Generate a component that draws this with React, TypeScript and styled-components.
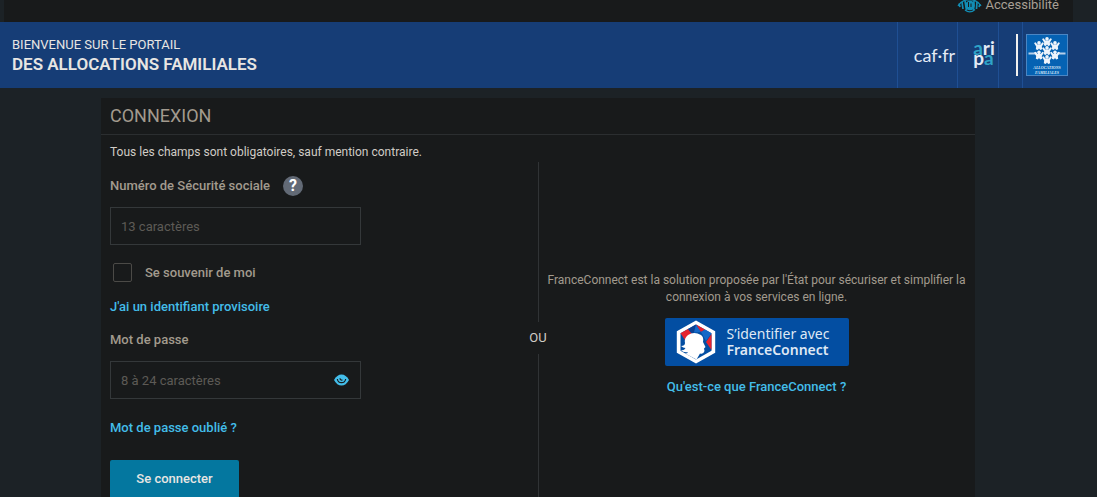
import React from "react";
import styled, { createGlobalStyle } from "styled-components";

const Global = createGlobalStyle`
  *, *::before, *::after { box-sizing: border-box; }
  body {
    margin: 0;
    background: #1c2226;
    color: #a29a8e;
    font-family: Roboto, "Liberation Sans", sans-serif;
    font-size: 13px;
    line-height: 18px;
  }
  a { text-decoration: none; }
  p, h1, h2 { margin: 0; }
`;

const Page = styled.div`
  min-height: 100vh;
  display: flex;
  flex-direction: column;
`;

const TopBar = styled.div`
  display: flex;
  justify-content: flex-end;
  align-items: flex-start;
  height: 22px;
  margin: 0 24px 0 4px;
  padding-right: 14px;
  background: #181a1b;
`;

const AccessLink = styled.a`
  display: flex;
  align-items: center;
  gap: 4px;
  height: 10px;
  color: #a8a095;
  font-size: 13px;
`;

const Header = styled.header`
  display: flex;
  justify-content: space-between;
  height: 66px;
  padding-left: 12px;
  background: #163d76;
`;

const Heading = styled.h1`
  display: flex;
  flex-direction: column;
  justify-content: center;
  color: #e8e6e3;
  font-size: 17px;
  font-weight: 600;
  line-height: 20px;
`;

const Welcome = styled.span`
  font-size: 13px;
  font-weight: 400;
  line-height: 18px;
`;

const Partners = styled.nav`
  display: flex;
  padding-right: 28px;
`;

const Partner = styled.a<{ $width: number; $inset?: number }>`
  display: flex;
  align-items: center;
  justify-content: center;
  width: ${(p) => p.$width}px;
  padding-left: ${(p) => p.$inset ?? 0}px;
  border-left: 1px solid #1f4f93;
  color: #e4ebf5;
`;

const CafName = styled.span`
  font-family: Lato, sans-serif;
  font-size: 18px;
`;

const Aripa = styled.span`
  padding-bottom: 4px;
  font-family: Lato, sans-serif;
  font-size: 19px;
  font-weight: 700;
  line-height: 10px;
`;

const Teal = styled.span`
  color: #2fa3c7;
`;

const Bar = styled.span`
  width: 2px;
  height: 42px;
  background: #f1f1ee;
`;

const Card = styled.main`
  flex: 1 0 auto;
  display: flex;
  flex-direction: column;
  margin: 10px 122px 0 101px;
  background: #181a1b;
`;

const CardTitle = styled.h2`
  height: 37px;
  padding-left: 9px;
  border-bottom: 1px solid #2b2e30;
  font-size: 18px;
  font-weight: 400;
  line-height: 36px;
  color: #a29a8e;
`;

const Columns = styled.div`
  flex: 1;
  display: grid;
  grid-template-columns: 1fr 18px 1fr;
`;

const Form = styled.form`
  display: flex;
  flex-direction: column;
  align-items: flex-start;
  padding: 8px 0 0 9px;
`;

const Note = styled.p`
  color: #d0ccc6;
  font-size: 12px;
  line-height: 19px;
`;

const LabelRow = styled.div`
  display: flex;
  align-items: center;
  gap: 13px;
  height: 20px;
  margin-top: 14px;
`;

const Label = styled.label`
  font-weight: 500;
`;

const Help = styled.button`
  width: 20px;
  height: 20px;
  padding: 0;
  border: 0;
  border-radius: 50%;
  background: #626a76;
  color: #fff;
  font: 700 16px/20px Roboto, sans-serif;
`;

const Field = styled.div`
  display: flex;
  align-items: center;
  width: 251px;
  height: 38px;
  margin-top: 11px;
  padding-right: 11px;
  border: 1px solid #34383a;
`;

const Input = styled.input`
  flex: 1;
  min-width: 0;
  height: 100%;
  padding: 0 10px;
  border: 0;
  background: transparent;
  color: #d0ccc6;
  font: 400 13px/18px Roboto, sans-serif;
  &::placeholder { color: #5d5a56; opacity: 1; }
`;

const IconButton = styled.button`
  display: flex;
  padding: 0;
  border: 0;
  background: transparent;
`;

const Remember = styled.label`
  display: flex;
  align-items: center;
  gap: 13px;
  margin: 18px 0 16px 3px;
  font-weight: 500;
`;

const Check = styled.input`
  appearance: none;
  width: 19px;
  height: 19px;
  margin: 0;
  border: 1px solid #4b4a47;
  border-radius: 2px;
`;

const Link = styled.a`
  color: #43bde9;
  font-weight: 500;
`;

const Forgotten = styled(Link)`
  margin-top: 20px;
`;

const Submit = styled.button`
  width: 129px;
  height: 37px;
  margin-top: 23px;
  border: 0;
  border-radius: 2px 2px 0 0;
  background: #04779f;
  color: #e8e6e3;
  font: 500 13px/18px Roboto, sans-serif;
`;

const Or = styled.div`
  display: flex;
  flex-direction: column;
  align-items: center;
  gap: 7px;
  padding-top: 27px;
  color: #d0ccc6;
  &::before, &::after { content: ""; width: 1px; background: #303335; }
  &::before { height: 160px; }
  &::after { flex: 1; }
`;

const Connect = styled.section`
  display: flex;
  flex-direction: column;
  align-items: center;
  padding: 137px 9px 0 0;
  text-align: center;
`;

const Description = styled.p`
  max-width: 420px;
  font-size: 12px;
  line-height: 17px;
`;

const ConnectButton = styled.button`
  display: flex;
  align-items: center;
  gap: 11px;
  width: 184px;
  height: 48px;
  margin: 12px 0;
  padding: 0 0 0 11px;
  border: 0;
  border-radius: 2px;
  background: #034ea2;
  color: #dfe8f4;
  font: 400 14px/16px "Noto Sans", sans-serif;
  text-align: left;
`;

const Strong = styled.span`
  display: block;
  font-weight: 600;
`;

const AccessIcon = () => (
  <svg width="25" height="15" viewBox="0 0 25 15" fill="none" stroke="#128db5" aria-hidden="true">
    <path d="M1 8Q4 2 12.500 1.500Q21 2 24 8" strokeWidth="1.300" />
    <path d="M2 5.500L3 9M5 4L6 11M8 3L9.500 12M17 3L16.500 12M20 4L19.500 11M23 6L22 9" strokeWidth="1.700" />
    <circle cx="13" cy="7.500" r="4.800" fill="#128db5" stroke="none" />
    <path d="M11.500 4V9M14 5.500V9" stroke="#181a1b" />
    <path d="M8 12Q13 16 18 11.500" strokeWidth="1.400" />
  </svg>
);

const EyeIcon = () => (
  <svg width="15" height="12" viewBox="0 0 15 12" aria-hidden="true">
    <path d="M0 6Q3 .5 7.500.5T15 6Q12 11.500 7.500 11.500T0 6Z" fill="#43bde9" />
    <path d="M3.300 5Q4 8.700 7.500 8.700T11.700 5" fill="none" stroke="#181a1b" strokeWidth="1.200" />
    <path d="M6 4.200Q6.200 6.400 8.500 6" fill="none" stroke="#181a1b" strokeWidth="1.200" />
  </svg>
);

const people = [
  [21, 7.5], [13, 11.5], [29, 11.5], [21, 16.5], [13, 21], [29, 21], [21, 25.5],
];

const FamilyLogo = () => (
  <svg width="42" height="42" viewBox="0 0 42 42" role="img" aria-label="Allocations familiales">
    <rect x=".5" y=".5" width="41" height="41" fill="#0562b3" stroke="#4a86c4" />
    <path d="M2.500 19.500H11M31 19.500h8.500" stroke="#b8cfea" strokeWidth="1.800" />
    {people.map(([x, y]) => (
      <g key={`${x}-${y}`} transform={`translate(${x} ${y})`} fill="#eef4fb">
        <circle cy="-2.600" r="1.800" />
        <path d="M-5-2.400L-3.400-3.200L-1.600-1H1.600L3.400-3.200L5-2.400L2.800 1L3.200 3.800L1.200 4.400L0 3L-1.200 4.400L-3.200 3.800L-2.800 1Z" />
      </g>
    ))}
    <g fill="#dce8f6" fontFamily="Liberation Serif" fontStyle="italic" fontWeight="700" fontSize="4" textAnchor="middle">
      <text x="21" y="35">ALLOCATIONS</text>
      <text x="21" y="40">FAMILIALES</text>
    </g>
  </svg>
);

const MarianneLogo = () => (
  <svg width="40" height="44" viewBox="0 0 40 44" aria-hidden="true">
    <path d="M20 .5L39.200 11.300V32.700L20 43.500L.8 32.700V11.300Z" fill="#fff" />
    <path d="M20 4.500L35.500 13.300V30.700L20 39.500L4.500 30.700V13.300Z" fill="#034ea2" />
    <path d="M4.500 13.300L12 9L16 13L9 20Z" fill="#e52330" />
    <path d="M12 9L20 4.500L18 12.500L15 13Z" fill="#0b3f91" />
    <path d="M20 4.500L25 12L18 12.500Z" fill="#1468c7" />
    <path d="M20 4.500L29 9.600L25 12Z" fill="#e52330" />
    <path d="M29 9.600L35.500 13.300L30 21L25 12Z" fill="#1468c7" />
    <path d="M35.500 14L30 22L35.500 30Z" fill="#e52330" />
    <path d="M4.500 30Q8 31 9.500 28Q7 28 5 26Q9 26 9 23Q8 18 12 15Q18 11 25 15Q28 17 27 22L29.500 27L28 28.500L28.500 31Q27.500 34.500 24 33.500L20.500 39.500L9 33.500Q11 34 12 32Q8 33 4.500 30Z" fill="#fff" />
  </svg>
);

export default function App() {
  return (
    <>
      <Global />
      <Page>
        <TopBar>
          <AccessLink href="#accessibilite"><AccessIcon />Accessibilité</AccessLink>
        </TopBar>
        <Header>
          <Heading><Welcome>BIENVENUE SUR LE PORTAIL</Welcome>DES ALLOCATIONS FAMILIALES</Heading>
          <Partners aria-label="Sites partenaires">
            <Partner href="#caf" $width={60} $inset={14}><CafName>caf·fr</CafName></Partner>
            <Partner href="#aripa" $width={41} $inset={12}>
              <Aripa><Teal>a</Teal>ri<br />p<Teal>a</Teal></Aripa>
            </Partner>
            <Partner as="span" $width={24} $inset={13}><Bar /></Partner>
            <Partner href="#familles" $width={47} $inset={2}><FamilyLogo /></Partner>
          </Partners>
        </Header>
        <Card>
          <CardTitle>CONNEXION</CardTitle>
          <Columns>
            <Form onSubmit={(e) => e.preventDefault()}>
              <Note>Tous les champs sont obligatoires, sauf mention contraire.</Note>
              <LabelRow>
                <Label htmlFor="nir">Numéro de Sécurité sociale</Label>
                <Help type="button">?</Help>
              </LabelRow>
              <Field><Input id="nir" placeholder="13 caractères" /></Field>
              <Remember><Check type="checkbox" />Se souvenir de moi</Remember>
              <Link href="#provisoire">J'ai un identifiant provisoire</Link>
              <LabelRow><Label htmlFor="password">Mot de passe</Label></LabelRow>
              <Field>
                <Input id="password" type="password" placeholder="8 à 24 caractères" />
                <IconButton type="button" aria-label="Afficher le mot de passe"><EyeIcon /></IconButton>
              </Field>
              <Forgotten href="#oublie">Mot de passe oublié ?</Forgotten>
              <Submit type="submit">Se connecter</Submit>
            </Form>
            <Or>OU</Or>
            <Connect>
              <Description>FranceConnect est la solution proposée par l'État pour sécuriser et simplifier la connexion à vos services en ligne.</Description>
              <ConnectButton type="button">
                <MarianneLogo />
                <span>S’identifier avec<Strong>FranceConnect</Strong></span>
              </ConnectButton>
              <Link href="#franceconnect">Qu'est-ce que FranceConnect ?</Link>
            </Connect>
          </Columns>
        </Card>
      </Page>
    </>
  );
}
